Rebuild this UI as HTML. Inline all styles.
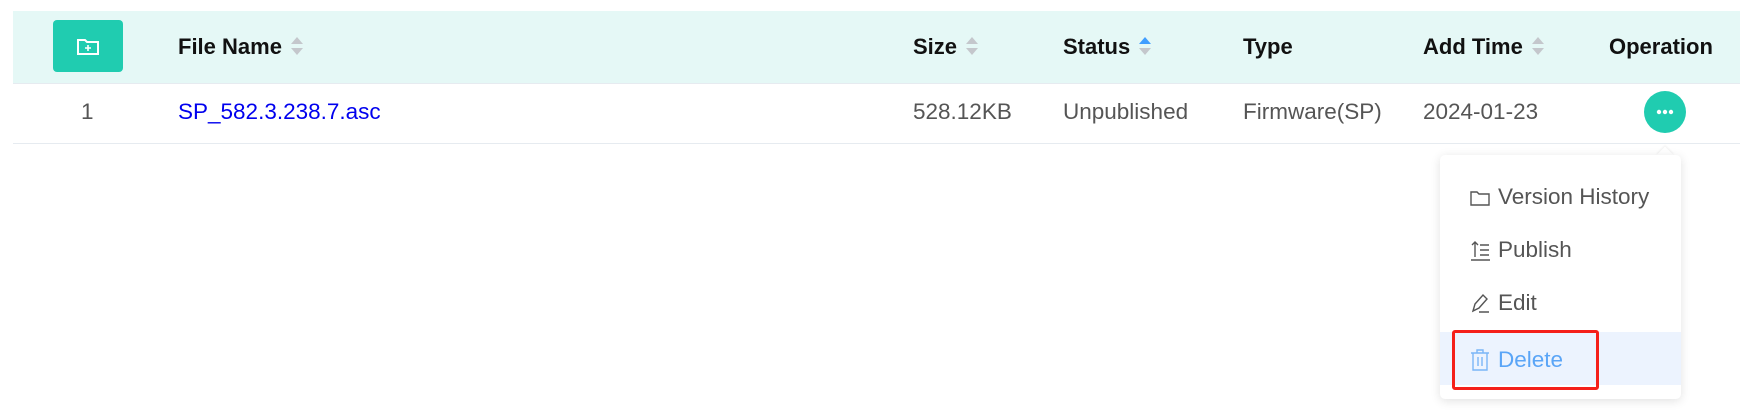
<!DOCTYPE html>
<html><head><meta charset="utf-8"><style>
body{margin:0;width:1744px;height:414px;background:#fff;font-family:"Liberation Sans","Noto Sans CJK SC",sans-serif;position:relative;overflow:hidden}
.hdr{position:absolute;left:13px;top:11px;width:1727px;height:72px;background:#e5f8f6;border-bottom:1px solid #e6ebf0}
.row{position:absolute;left:13px;top:84px;width:1727px;height:59px;border-bottom:1px solid #e6ebf0}
.t{position:absolute;font-size:22px;line-height:26px;white-space:nowrap}
.h{font-weight:bold;color:#111;top:34px}
.c{color:#555;top:99px;font-size:22.5px}
.sort{display:inline-block;vertical-align:middle;margin-left:9px;width:12px;height:20px;position:relative;top:-2px}
.sort:before,.sort:after{content:"";position:absolute;left:0;border-left:6px solid transparent;border-right:6px solid transparent}
.sort:before{top:1px;border-bottom:7px solid #c4c7cc}
.sort:after{bottom:1px;border-top:7px solid #c4c7cc}
.sort.up:before{border-bottom-color:#409eff}
.btn{position:absolute;left:53px;top:20px;width:70px;height:52px;background:#20ccb0;border-radius:4px}
.dots{position:absolute;left:1644px;top:91px;width:42px;height:42px;border-radius:50%;background:#20ccb0}
.menu{position:absolute;left:1440px;top:155px;width:241px;height:244px;background:#fff;border-radius:5px;box-shadow:0 2px 10px rgba(0,0,0,.12)}
.arrow{position:absolute;left:1659px;top:149px;width:12px;height:12px;background:#fff;transform:rotate(45deg);box-shadow:-1px -1px 2px rgba(0,0,0,.06)}
.mi{position:absolute;left:58px;font-size:22.5px;color:#555;line-height:26px}
.ic{position:absolute;left:30px}
</style></head><body>
<div class="hdr"></div>
<div class="row"></div>
<div class="btn"><svg width="70" height="52" viewBox="0 0 70 52"><path d="M25 20h7l2 2h11v12H25z" fill="none" stroke="#fff" stroke-width="2"/><path d="M35 25v6M32 28h6" stroke="#fff" stroke-width="1.6"/></svg></div>
<div class="t h" style="left:178px">File Name<span class="sort"></span></div>
<div class="t h" style="left:913px">Size<span class="sort"></span></div>
<div class="t h" style="left:1063px">Status<span class="sort up"></span></div>
<div class="t h" style="left:1243px">Type</div>
<div class="t h" style="left:1423px">Add Time<span class="sort"></span></div>
<div class="t h" style="left:1609px">Operation</div>
<div class="t c" style="left:81px">1</div>
<div class="t c" style="left:178px;color:#0000ee">SP_582.3.238.7.asc</div>
<div class="t c" style="left:913px">528.12KB</div>
<div class="t c" style="left:1063px">Unpublished</div>
<div class="t c" style="left:1243px">Firmware(SP)</div>
<div class="t c" style="left:1423px">2024-01-23</div>
<div class="dots"><svg width="42" height="42"><circle cx="15" cy="21" r="2.2" fill="#fff"/><circle cx="21" cy="21" r="2.2" fill="#fff"/><circle cx="27" cy="21" r="2.2" fill="#fff"/></svg></div>
<div class="arrow"></div>
<div class="menu">
 <svg class="ic" style="top:34px" width="20" height="18"><path d="M1 3h6l2 2h10v11H1z" fill="none" stroke="#555" stroke-width="1.4"/></svg>
 <div class="mi" style="top:29px">Version History</div>
 <svg class="ic" style="top:84px" width="20" height="22"><path d="M5 18V3M2 6l3-3 3 3M10 6h9M10 11h9M10 16h9M1 21h19" fill="none" stroke="#555" stroke-width="1.4"/></svg>
 <div class="mi" style="top:82px">Publish</div>
 <svg class="ic" style="top:137px" width="20" height="22"><path d="M3 19l2-7 8-9 4 4-8 9zM9 20h10" fill="none" stroke="#555" stroke-width="1.4"/></svg>
 <div class="mi" style="top:135px">Edit</div>
 <div style="position:absolute;left:0;top:177px;width:241px;height:53px;background:#ecf3fe"></div>
 <svg class="ic" style="top:194px" width="20" height="22"><path d="M1 4h18M7 4V1h6v3M3 4v17h14V4M8 8v9M12 8v9" fill="none" stroke="#7ab6f7" stroke-width="1.4"/></svg>
 <div class="mi" style="top:192px;color:#5aa5f7">Delete</div>
</div>
<div style="position:absolute;left:1452px;top:330px;width:141px;height:54px;border:3px solid #f5201a;border-radius:3px"></div>
</body></html>
